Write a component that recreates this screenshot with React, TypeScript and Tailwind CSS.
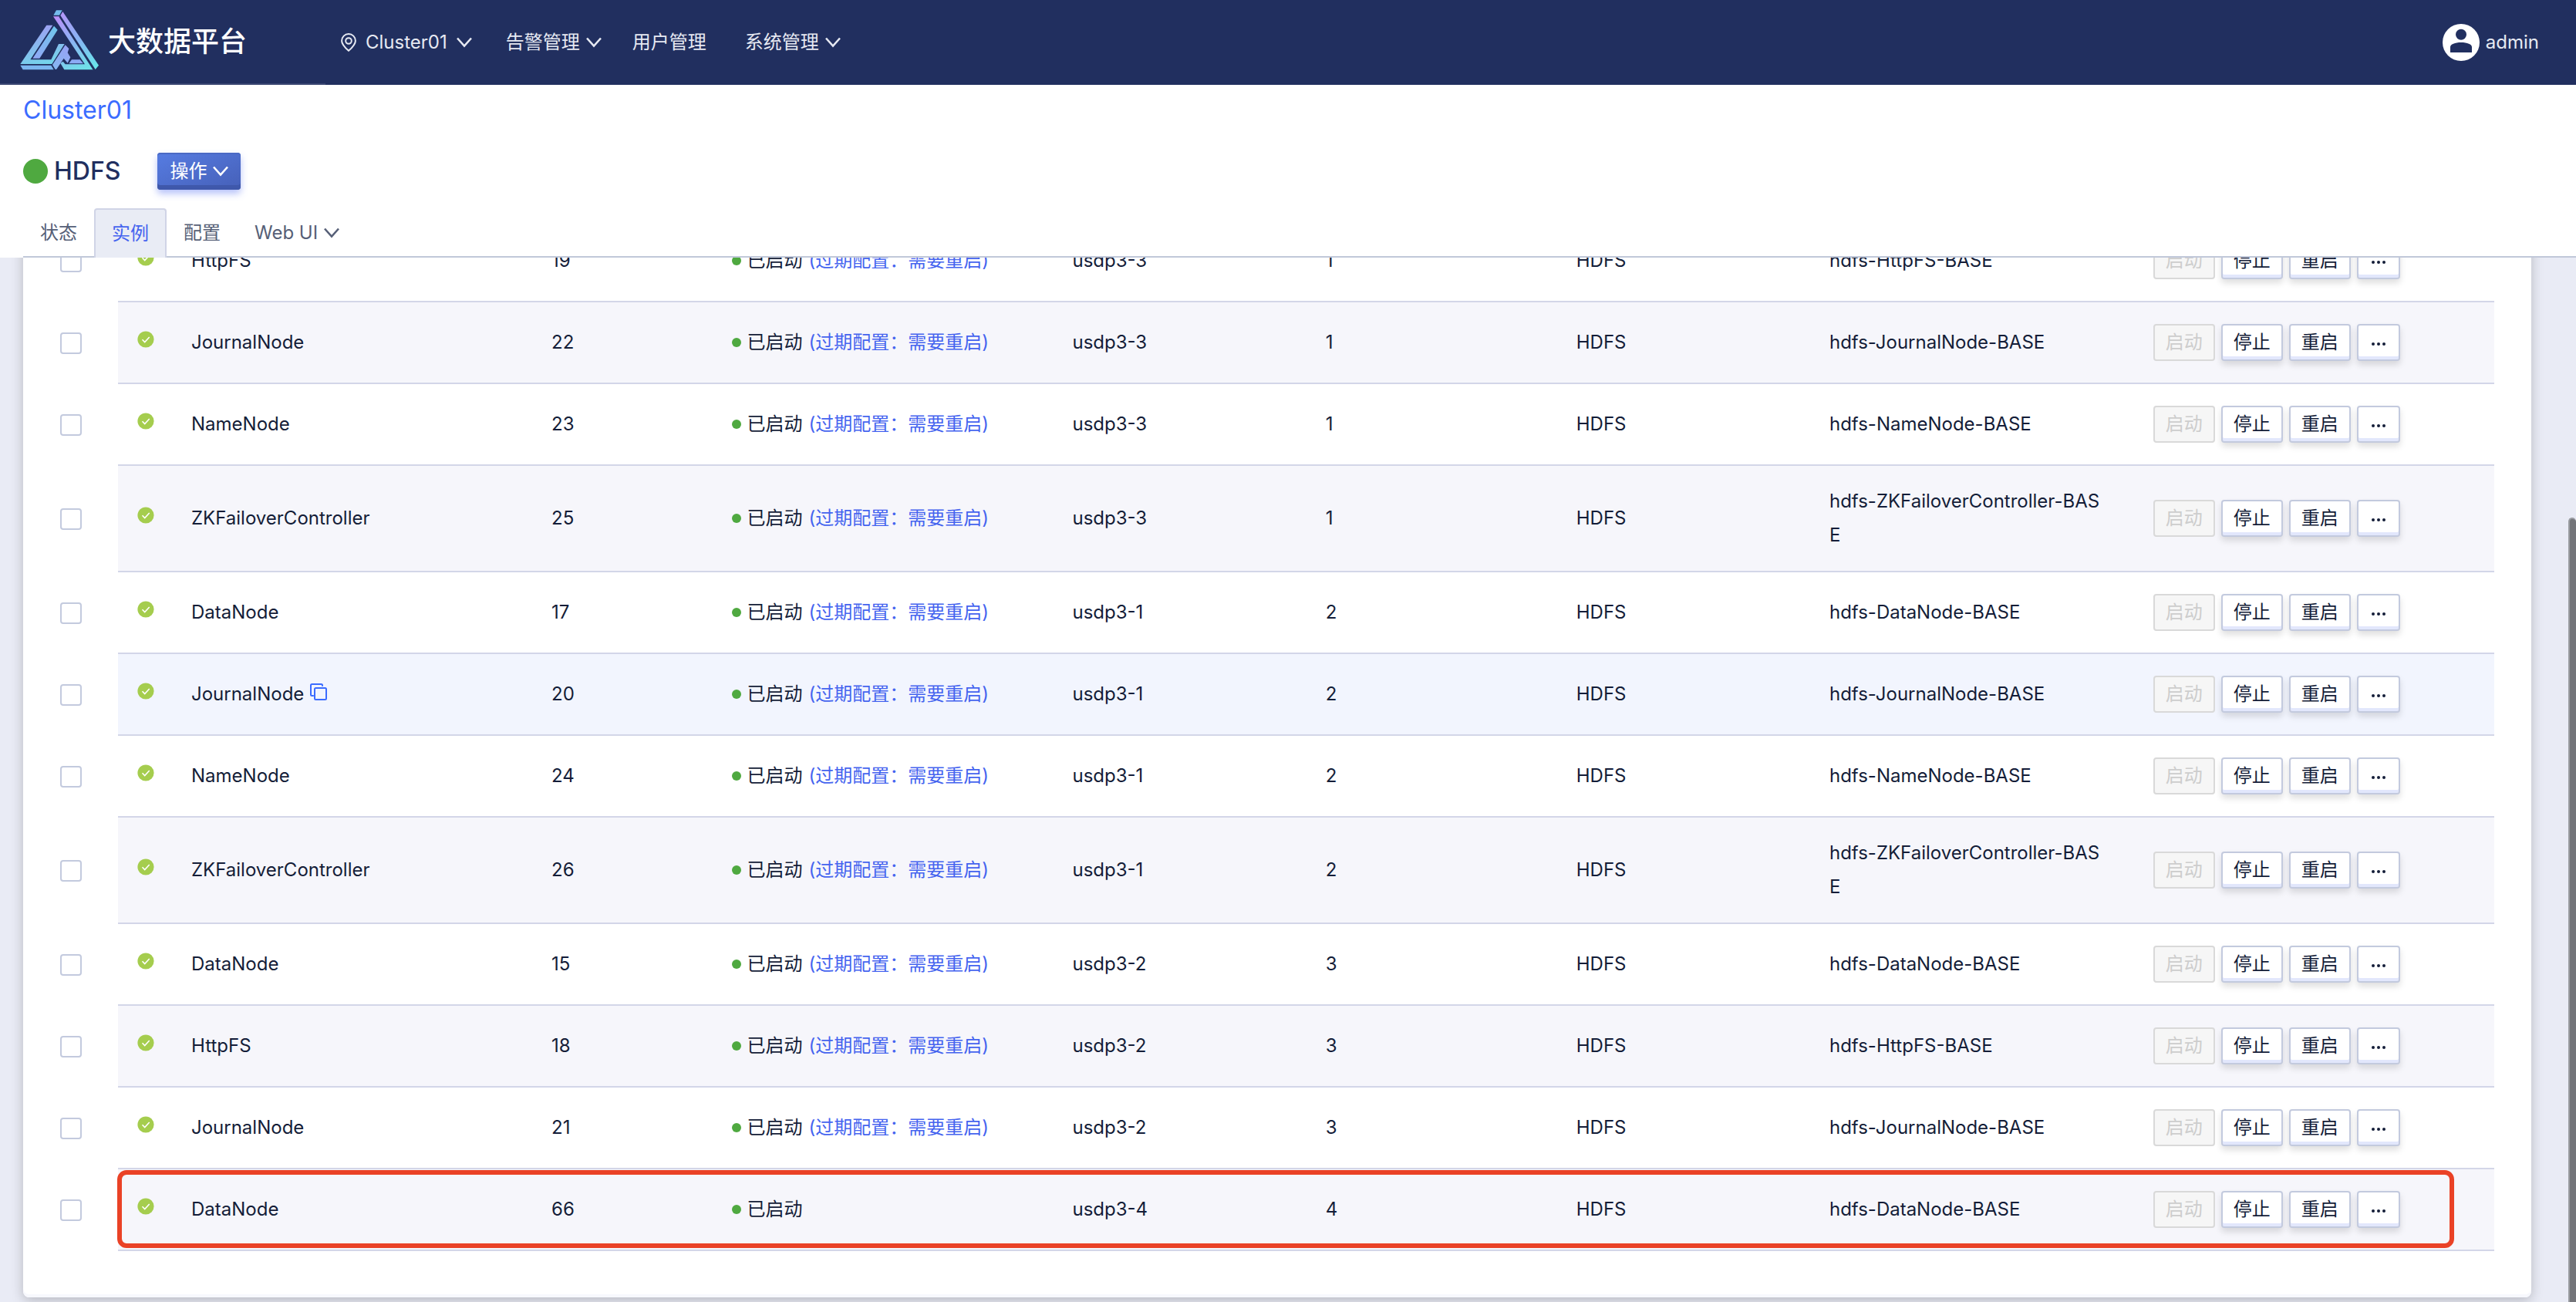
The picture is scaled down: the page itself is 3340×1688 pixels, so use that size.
import React from "react";

type Row = {
  name: string;
  id: number;
  host: string;
  rack: number;
  group: string;
  stale?: boolean;
  hovered?: boolean;
};

const rows: Row[] = [
  { name: "HttpFS", id: 19, host: "usdp3-3", rack: 1, group: "hdfs-HttpFS-BASE", stale: true },
  { name: "JournalNode", id: 22, host: "usdp3-3", rack: 1, group: "hdfs-JournalNode-BASE", stale: true },
  { name: "NameNode", id: 23, host: "usdp3-3", rack: 1, group: "hdfs-NameNode-BASE", stale: true },
  { name: "ZKFailoverController", id: 25, host: "usdp3-3", rack: 1, group: "hdfs-ZKFailoverController-BASE", stale: true },
  { name: "DataNode", id: 17, host: "usdp3-1", rack: 2, group: "hdfs-DataNode-BASE", stale: true },
  { name: "JournalNode", id: 20, host: "usdp3-1", rack: 2, group: "hdfs-JournalNode-BASE", stale: true, hovered: true },
  { name: "NameNode", id: 24, host: "usdp3-1", rack: 2, group: "hdfs-NameNode-BASE", stale: true },
  { name: "ZKFailoverController", id: 26, host: "usdp3-1", rack: 2, group: "hdfs-ZKFailoverController-BASE", stale: true },
  { name: "DataNode", id: 15, host: "usdp3-2", rack: 3, group: "hdfs-DataNode-BASE", stale: true },
  { name: "HttpFS", id: 18, host: "usdp3-2", rack: 3, group: "hdfs-HttpFS-BASE", stale: true },
  { name: "JournalNode", id: 21, host: "usdp3-2", rack: 3, group: "hdfs-JournalNode-BASE", stale: true },
  { name: "DataNode", id: 66, host: "usdp3-4", rack: 4, group: "hdfs-DataNode-BASE" },
];

function Logo() {
  return (
    <svg viewBox="0 0 360 330" className="h-[110px] w-[120px] shrink-0" aria-hidden="true">
      <defs>
        <linearGradient id="bar" gradientUnits="userSpaceOnUse" x1="160" y1="60" x2="270" y2="270">
          <stop offset="0" stopColor="#bd8df8" />
          <stop offset="0.45" stopColor="#8fb0f4" />
          <stop offset="1" stopColor="#6fe0e8" />
        </linearGradient>
        <linearGradient id="side" gradientUnits="userSpaceOnUse" x1="180" y1="50" x2="315" y2="265">
          <stop offset="0" stopColor="#b496f8" />
          <stop offset="0.5" stopColor="#86b4f2" />
          <stop offset="1" stopColor="#68e6ea" />
        </linearGradient>
        <linearGradient id="left" gradientUnits="userSpaceOnUse" x1="110" y1="100" x2="150" y2="255">
          <stop offset="0" stopColor="#9da0f3" />
          <stop offset="1" stopColor="#70d8ea" />
        </linearGradient>
        <linearGradient id="leftSide" gradientUnits="userSpaceOnUse" x1="155" y1="105" x2="80" y2="230">
          <stop offset="0" stopColor="#6fc6ec" />
          <stop offset="1" stopColor="#8fa8f5" />
        </linearGradient>
        <linearGradient id="mid" gradientUnits="userSpaceOnUse" x1="205" y1="180" x2="150" y2="272">
          <stop offset="0" stopColor="#97a0f5" />
          <stop offset="1" stopColor="#86b8f2" />
        </linearGradient>
      </defs>
      <polygon points="159,43 182,43 171,62 148,62" fill="#74bbec" />
      <polygon points="147,67 171,67 304,274 190,274 175,249 185,242 194,253 270,253" fill="url(#bar)" />
      <polygon points="184,48 324,257 311,273 175,63" fill="url(#side)" />
      <path d="M171 67 304 274" stroke="#212f5f" strokeWidth="4" />
      <polygon points="121,101 145,101 58,235 139,235 168,174 191,174 142,252 19,252" fill="url(#left)" />
      <polygon points="150,104 164,119 94,230 67,230" fill="url(#leftSide)" />
      <polygon points="19,257 139,257 149,274 29,274" fill="#7cb6f0" />
      <polygon points="194,178 208,192 203,208 214,226 203,248 188,230 160,272 155,273 144,255" fill="url(#mid)" />
      <polygon points="219,235 251,235 264,250 208,250" fill="#8caaf4" />
    </svg>
  );
}

function Chevron() {
  return (
    <svg viewBox="0 0 20 14" className="h-[14px] w-5 shrink-0" fill="none" stroke="currentColor" strokeWidth="2.6" aria-hidden="true">
      <path d="M1 1.5 10 11.5 19 1.5" />
    </svg>
  );
}

function Pin() {
  return (
    <svg viewBox="0 0 20 24" className="h-6 w-5 shrink-0" fill="none" stroke="currentColor" strokeWidth="2" aria-hidden="true">
      <path d="M10 22.8C4.600 18 1.100 14.200 1.100 9.900a8.900 8.900 0 0 1 17.800 0c0 4.300-3.500 8.100-8.900 12.900Z" />
      <circle cx="10" cy="10" r="3.800" />
    </svg>
  );
}

function Avatar() {
  return (
    <svg viewBox="0 0 48 48" className="size-12 shrink-0" aria-hidden="true">
      <circle cx="24" cy="24" r="24" fill="#fff" />
      <circle cx="24" cy="13.800" r="7" fill="#212f5f" />
      <path d="M10 37v-7c0-3.500 6-6 14-6s14 2.500 14 6v7Z" fill="#212f5f" />
    </svg>
  );
}

function OkIcon() {
  return (
    <svg viewBox="0 0 22 22" className="mb-2 size-[22px]" role="img" aria-label="正常">
      <circle cx="11" cy="11" r="10.600" fill="#a5cd4e" />
      <path d="m6.500 11.200 3.200 3.300 6-6.500" fill="none" stroke="#fff" strokeWidth="1.600" />
    </svg>
  );
}

function CopyIcon() {
  return (
    <svg viewBox="0 0 22 22" className="size-[22px]" fill="none" stroke="#3b6cff" strokeWidth="2" aria-hidden="true">
      <rect x="6" y="6" width="15" height="15" rx="1.500" />
      <path d="M4.800 16H2.500A1.500 1.500 0 0 1 1 14.500v-12A1.500 1.500 0 0 1 2.500 1h12A1.500 1.500 0 0 1 16 2.500v1.300" />
    </svg>
  );
}

function RowButton({ children, label }: { children: React.ReactNode; label?: string }) {
  return (
    <button
      type="button"
      aria-label={label}
      className="flex h-12 items-center justify-center rounded border-2 border-[#c3cade] bg-white px-[14px] shadow-[inset_0_-4px_0_#e2e7fc,0_5px_8px_rgba(0,0,0,0.13)]"
    >
      {children}
    </button>
  );
}

function InstanceRow({ row, index }: { row: Row; index: number }) {
  const tint = row.hovered ? "bg-[#f2f5fe]" : index % 2 ? "bg-[#f6f6fb]" : "bg-white";
  const base = "border-b-2 border-[#d3d6e8] py-6 pl-4 " + tint;
  const cell = base + " pr-4";
  return (
    <tr>
      <td className="align-middle">
        <input
          type="checkbox"
          aria-label={row.name + " " + row.id}
          className="block size-7 appearance-none rounded border-2 border-[#c3cade] bg-white"
        />
      </td>
      <td className={"border-b-2 border-[#d3d6e8] pl-[25px] " + tint}>
        <OkIcon />
      </td>
      <td className={cell}>
        <div className="flex min-h-14 items-center gap-2">
          {row.name}
          {row.hovered && (
            <button type="button" aria-label="复制" className="mb-1.5">
              <CopyIcon />
            </button>
          )}
        </div>
      </td>
      <td className={cell}>{row.id}</td>
      <td className={cell}>
        <div className="flex items-center whitespace-nowrap">
          <span className="mr-2 size-3 rounded-full bg-[#4fa940]" />
          已启动
          {row.stale && (
            <a href="#stale" className="ml-2 text-[#4564ef]">
              (过期配置：需要重启)
            </a>
          )}
        </div>
      </td>
      <td className={cell}>{row.host}</td>
      <td className={cell}>{row.rack}</td>
      <td className={cell}>HDFS</td>
      <td className={base + " pr-12 break-all"}>{row.group}</td>
      <td className={cell}>
        <div className="flex gap-2 whitespace-nowrap">
          <button
            type="button"
            disabled
            className="flex h-12 items-center rounded border-2 border-[#d9d9d9] bg-[#f6f6f6] px-[14px] text-[#cdcdcd]"
          >
            启动
          </button>
          <RowButton>停止</RowButton>
          <RowButton>重启</RowButton>
          <RowButton label="更多">
            <svg viewBox="0 0 24 8" className="mt-1 h-2 w-6" fill="#141d38" aria-hidden="true">
              <circle cx="5" cy="4" r="2" />
              <circle cx="12" cy="4" r="2" />
              <circle cx="19" cy="4" r="2" />
            </svg>
          </RowButton>
        </div>
      </td>
    </tr>
  );
}

export default function App() {
  return (
    <div className="flex h-screen flex-col overflow-hidden bg-[#e9ebf5] font-['Inter','Noto_Sans_CJK_SC',sans-serif] text-[24px] leading-[44px] text-[#141d38]">
      <header className="flex h-[110px] shrink-0 items-center bg-[#212f5f] text-[#e6e9f2]">
        <div className="flex h-full w-[422px] items-center border-b-2 border-[#3b4672] pl-5">
          <Logo />
          <span className="text-[36px] font-medium text-white">大数据平台</span>
        </div>
        <nav className="ml-5 flex gap-10">
          <button type="button" className="mr-1 flex items-center gap-3">
            <Pin />
            Cluster01
            <Chevron />
          </button>
          <button type="button" className="flex items-center gap-2">
            告警管理
            <Chevron />
          </button>
          <button type="button" className="mr-2.5">
            用户管理
          </button>
          <button type="button" className="flex items-center gap-2">
            系统管理
            <Chevron />
          </button>
        </nav>
        <button type="button" className="mr-12 ml-auto flex items-center gap-2">
          <Avatar />
          admin
        </button>
      </header>

      <section className="flex shrink-0 flex-col bg-white pl-[30px]">
        <a href="#cluster" className="mt-[11px] self-start text-[32px] text-[#3b6cff]">
          Cluster01
        </a>
        <div className="mt-[33px] flex items-center">
          <span className="size-8 rounded-full bg-[#4fa940]" />
          <h1 className="ml-2 text-[32px] font-medium text-[#212f5f]">HDFS</h1>
          <button
            type="button"
            className="ml-12 flex h-12 items-center gap-2 rounded bg-linear-to-br from-[#567ce2] to-[#4660b8] px-4 text-white shadow-[inset_0_2px_0_#4a69c4,inset_0_-6px_0_#3f58ab,0_5px_10px_rgba(69,100,239,0.4)]"
          >
            操作
            <Chevron />
          </button>
        </div>
        <div className="mt-6 flex h-16 items-stretch text-[#565f77]" role="tablist">
          <button type="button" role="tab" className="border-b-2 border-[#c1c8d9] px-[22px] pt-0.5">
            状态
          </button>
          <button
            type="button"
            role="tab"
            aria-selected="true"
            className="rounded-t border-2 border-b-0 border-[#d0d4e6] bg-[#e9ecf5] px-[21px] text-[#4564ef]"
          >
            实例
          </button>
          <button type="button" role="tab" className="border-b-2 border-[#c1c8d9] px-[22px] pt-0.5">
            配置
          </button>
          <button type="button" role="tab" className="flex grow items-center gap-2 border-b-2 border-[#c1c8d9] px-[22px] pt-0.5">
            Web UI
            <Chevron />
          </button>
        </div>
      </section>

      <main className="relative flex min-h-0 grow flex-col justify-end overflow-hidden pr-[58px] pb-1.5 pl-[30px]">
        <div className="shrink-0 rounded-lg bg-white pt-12 pr-12 pb-[60px] pl-12 shadow-[inset_0_-4px_0_#f7f8fd,0_4px_16px_rgba(0,0,0,0.22)]">
          <div className="relative">
            <table className="w-full table-fixed border-separate border-spacing-0 text-left">
              <colgroup>
                <col className="w-[75px]" />
                <col className="w-[79px]" />
                <col className="w-[14.8%]" />
                <col className="w-[7.4%]" />
                <col className="w-[14%]" />
                <col className="w-[10.4%]" />
                <col className="w-[10.3%]" />
                <col className="w-[10.4%]" />
                <col className="w-[13.3%]" />
                <col />
              </colgroup>
              <tbody>
                {rows.map((row, index) => (
                  <InstanceRow key={row.id} row={row} index={index} />
                ))}
              </tbody>
            </table>
            <div className="pointer-events-none absolute right-[52px] bottom-1 left-[74px] h-[101px] rounded-xl border-[6px] border-[#ea4226]" />
          </div>
        </div>
        <div className="absolute top-[337px] right-0 bottom-0 w-2.5 rounded-t-full border-t-2 border-l-2 border-[#9a9ca1] bg-[#737479]" />
      </main>
    </div>
  );
}
